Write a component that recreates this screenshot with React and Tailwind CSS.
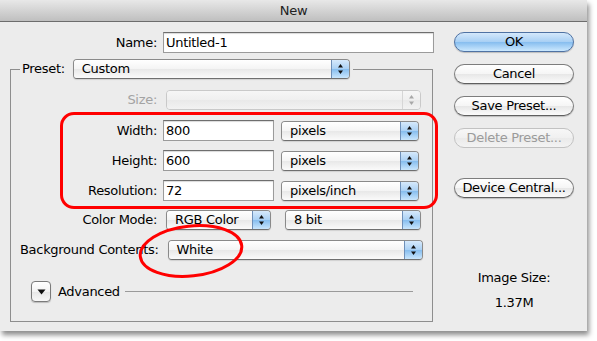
import React from "react"

const Arrows = ({ dim }) => (
  <svg width="7" height="12" viewBox="0 0 7 12">
    <polygon points="3.5,1 6,4.5 1,4.5" fill={dim ? "#a8a8a8" : "#111"} />
    <polygon points="1,7.5 6,7.5 3.5,11" fill={dim ? "#a8a8a8" : "#111"} />
  </svg>
)

const Popup = ({ value, className = "", disabled }) => (
  <div
    className={
      disabled
        ? `flex h-[20px] overflow-hidden rounded-[4px] border border-[#c9c9c9] ${className}`
        : `flex h-[20px] overflow-hidden rounded-[4px] border border-[#8a8a8a] border-b-[#6f6f6f] shadow-[0_1px_1px_rgba(0,0,0,0.12)] ${className}`
    }
  >
    <div
      className={
        disabled
          ? "flex flex-1 items-center bg-[linear-gradient(to_bottom,#f6f6f6_0%,#efefef_50%,#e9e9e9_51%,#f2f2f2_100%)] pl-[8px]"
          : "flex flex-1 items-center bg-[linear-gradient(to_bottom,#ffffff_0%,#f4f4f4_50%,#e8e8e8_51%,#fafafa_100%)] pl-[8px] text-black"
      }
    >
      {value}
    </div>
    <div
      className={
        disabled
          ? "flex w-[18px] items-center justify-center border-l border-[#d6d6d6] bg-[linear-gradient(to_bottom,#f6f6f6_0%,#efefef_50%,#e9e9e9_51%,#f2f2f2_100%)]"
          : "flex w-[18px] items-center justify-center border-l border-[#6e8fb8] bg-[linear-gradient(to_bottom,#d6e9fb_0%,#a9d0f4_50%,#86bdee_51%,#c9e6fd_100%)]"
      }
    >
      <Arrows dim={disabled} />
    </div>
  </div>
)

const Field = ({ value, className = "" }) => (
  <div
    className={`flex h-[21px] items-center border border-[#9b9b9b] border-t-[#6e6e6e] bg-white pl-[2px] shadow-[inset_0_1px_1px_rgba(0,0,0,0.15)] ${className}`}
  >
    {value}
  </div>
)

const Button = ({ label, kind }) => {
  if (kind === "default")
    return (
      <div className="flex h-[20px] w-[120px] items-center justify-center rounded-full border border-[#4f72a3] bg-[linear-gradient(to_bottom,#d4e8fb_0%,#a7cff4_50%,#86bdef_51%,#cbe8fe_100%)] text-black shadow-[0_1px_1px_rgba(0,0,0,0.2)]">
        {label}
      </div>
    )
  if (kind === "disabled")
    return (
      <div className="flex h-[20px] w-[120px] items-center justify-center rounded-full border border-[#c2c2c2] bg-[linear-gradient(to_bottom,#f7f7f7_0%,#f0f0f0_50%,#eaeaea_51%,#f3f3f3_100%)] text-[#9b9b9b]">
        {label}
      </div>
    )
  return (
    <div className="flex h-[20px] w-[120px] items-center justify-center rounded-full border border-[#7d7d7d] border-b-[#5f5f5f] bg-[linear-gradient(to_bottom,#ffffff_0%,#f5f5f5_50%,#e7e7e7_51%,#fbfbfb_100%)] text-black shadow-[0_1px_1px_rgba(0,0,0,0.2)]">
      {label}
    </div>
  )
}

const Row = ({ label, children, className = "", dim }) => (
  <div className={`flex items-center ${className}`}>
    <div className={dim ? "w-[146px] text-right text-[#a3a3a3]" : "w-[146px] text-right"}>{label}</div>
    {children}
  </div>
)

export default function App() {
  return (
    <div className="h-[341px] w-[597px] bg-white font-['DejaVu_Sans',sans-serif] text-[13px] leading-[16px] tracking-[-0.3px] text-black">
      <div className="flex h-[331px] w-[587px] flex-col bg-[#ececec] shadow-[2px_4px_5px_rgba(0,0,0,0.45)]">
        {/* title bar */}
        <div className="flex h-[22px] items-center justify-center border-b border-[#6d6d6d] bg-[linear-gradient(to_bottom,#e8e8e8,#bfbfbf)] text-[#222]">
          New
        </div>

        <div className="flex">
          {/* left side */}
          <div className="relative w-[454px]">
            <div className="flex items-center pt-[10px]">
              <div className="w-[157px] text-right">Name:</div>
              <Field value="Untitled-1" className="ml-[6px] w-[271px]" />
            </div>

            <div className="ml-[10px] mt-[16px] h-[253px] w-[423px] border border-[#8e8e8e]">
              <div className="ml-[9px] mt-[-11px] flex w-[333px] items-center bg-[#ececec] pl-[2px]">
                <span>Preset:</span>
                <Popup value="Custom" className="ml-[8px] w-[277px]" />
              </div>

              <Row label="Size:" dim className="mt-[11px]">
                <Popup value="" disabled className="ml-[9px] w-[255px]" />
              </Row>

              <Row label="Width:" className="mt-[10px]">
                <Field value="800" className="ml-[6px] w-[111px]" />
                <Popup value="pixels" className="ml-[7px] w-[138px]" />
              </Row>
              <Row label="Height:" className="mt-[9px]">
                <Field value="600" className="ml-[6px] w-[111px]" />
                <Popup value="pixels" className="ml-[7px] w-[138px]" />
              </Row>
              <Row label="Resolution:" className="mt-[9px]">
                <Field value="72" className="ml-[6px] w-[111px]" />
                <Popup value="pixels/inch" className="ml-[7px] w-[138px]" />
              </Row>

              <Row label="Color Mode:" className="mt-[9px]">
                <Popup value="RGB Color" className="ml-[9px] w-[105px]" />
                <Popup value="8 bit" className="ml-[14px] w-[136px]" />
              </Row>
              <div className="mt-[10px] flex items-center">
                <div className="ml-[9px] whitespace-nowrap">Background Contents:</div>
                <Popup value="White" className="ml-[9px] w-[255px]" />
              </div>

              <div className="mt-[21px] flex items-center">
                <div className="ml-[20px] flex h-[21px] w-[20px] items-center justify-center rounded-[4px] border border-[#7a7a7a] bg-[linear-gradient(to_bottom,#ffffff_0%,#f3f3f3_50%,#e6e6e6_51%,#f8f8f8_100%)] shadow-[0_1px_1px_rgba(0,0,0,0.2)]">
                  <svg width="9" height="6" viewBox="0 0 9 6">
                    <polygon points="0.5,0.5 8.5,0.5 4.5,5.5" fill="#111" />
                  </svg>
                </div>
                <span className="ml-[7px]">Advanced</span>
                <div className="ml-[5px] mr-[19px] flex-1 border-t border-[#9a9a9a]" />
              </div>
            </div>

            {/* annotations */}
            <div className="absolute left-[60px] top-[90px] h-[97px] w-[378px] rounded-[14px] border-[3px] border-[#ff0000]" />
            <svg className="absolute left-[135px] top-[198px]" width="115" height="62" viewBox="0 0 115 62">
              <ellipse cx="56" cy="31" rx="51" ry="25" fill="none" stroke="#ff0000" strokeWidth="3" transform="rotate(-6 56 31)" />
            </svg>
          </div>

          {/* right side */}
          <div className="flex w-[120px] flex-col pt-[10px]">
            <Button label="OK" kind="default" />
            <div className="mt-[12px]">
              <Button label="Cancel" />
            </div>
            <div className="mt-[12px]">
              <Button label="Save Preset..." />
            </div>
            <div className="mt-[12px]">
              <Button label="Delete Preset..." kind="disabled" />
            </div>
            <div className="mt-[30px]">
              <Button label="Device Central..." />
            </div>
            <div className="mt-[72px] text-center">Image Size:</div>
            <div className="mt-[9px] text-center">1.37M</div>
          </div>
        </div>
      </div>
    </div>
  )
}
